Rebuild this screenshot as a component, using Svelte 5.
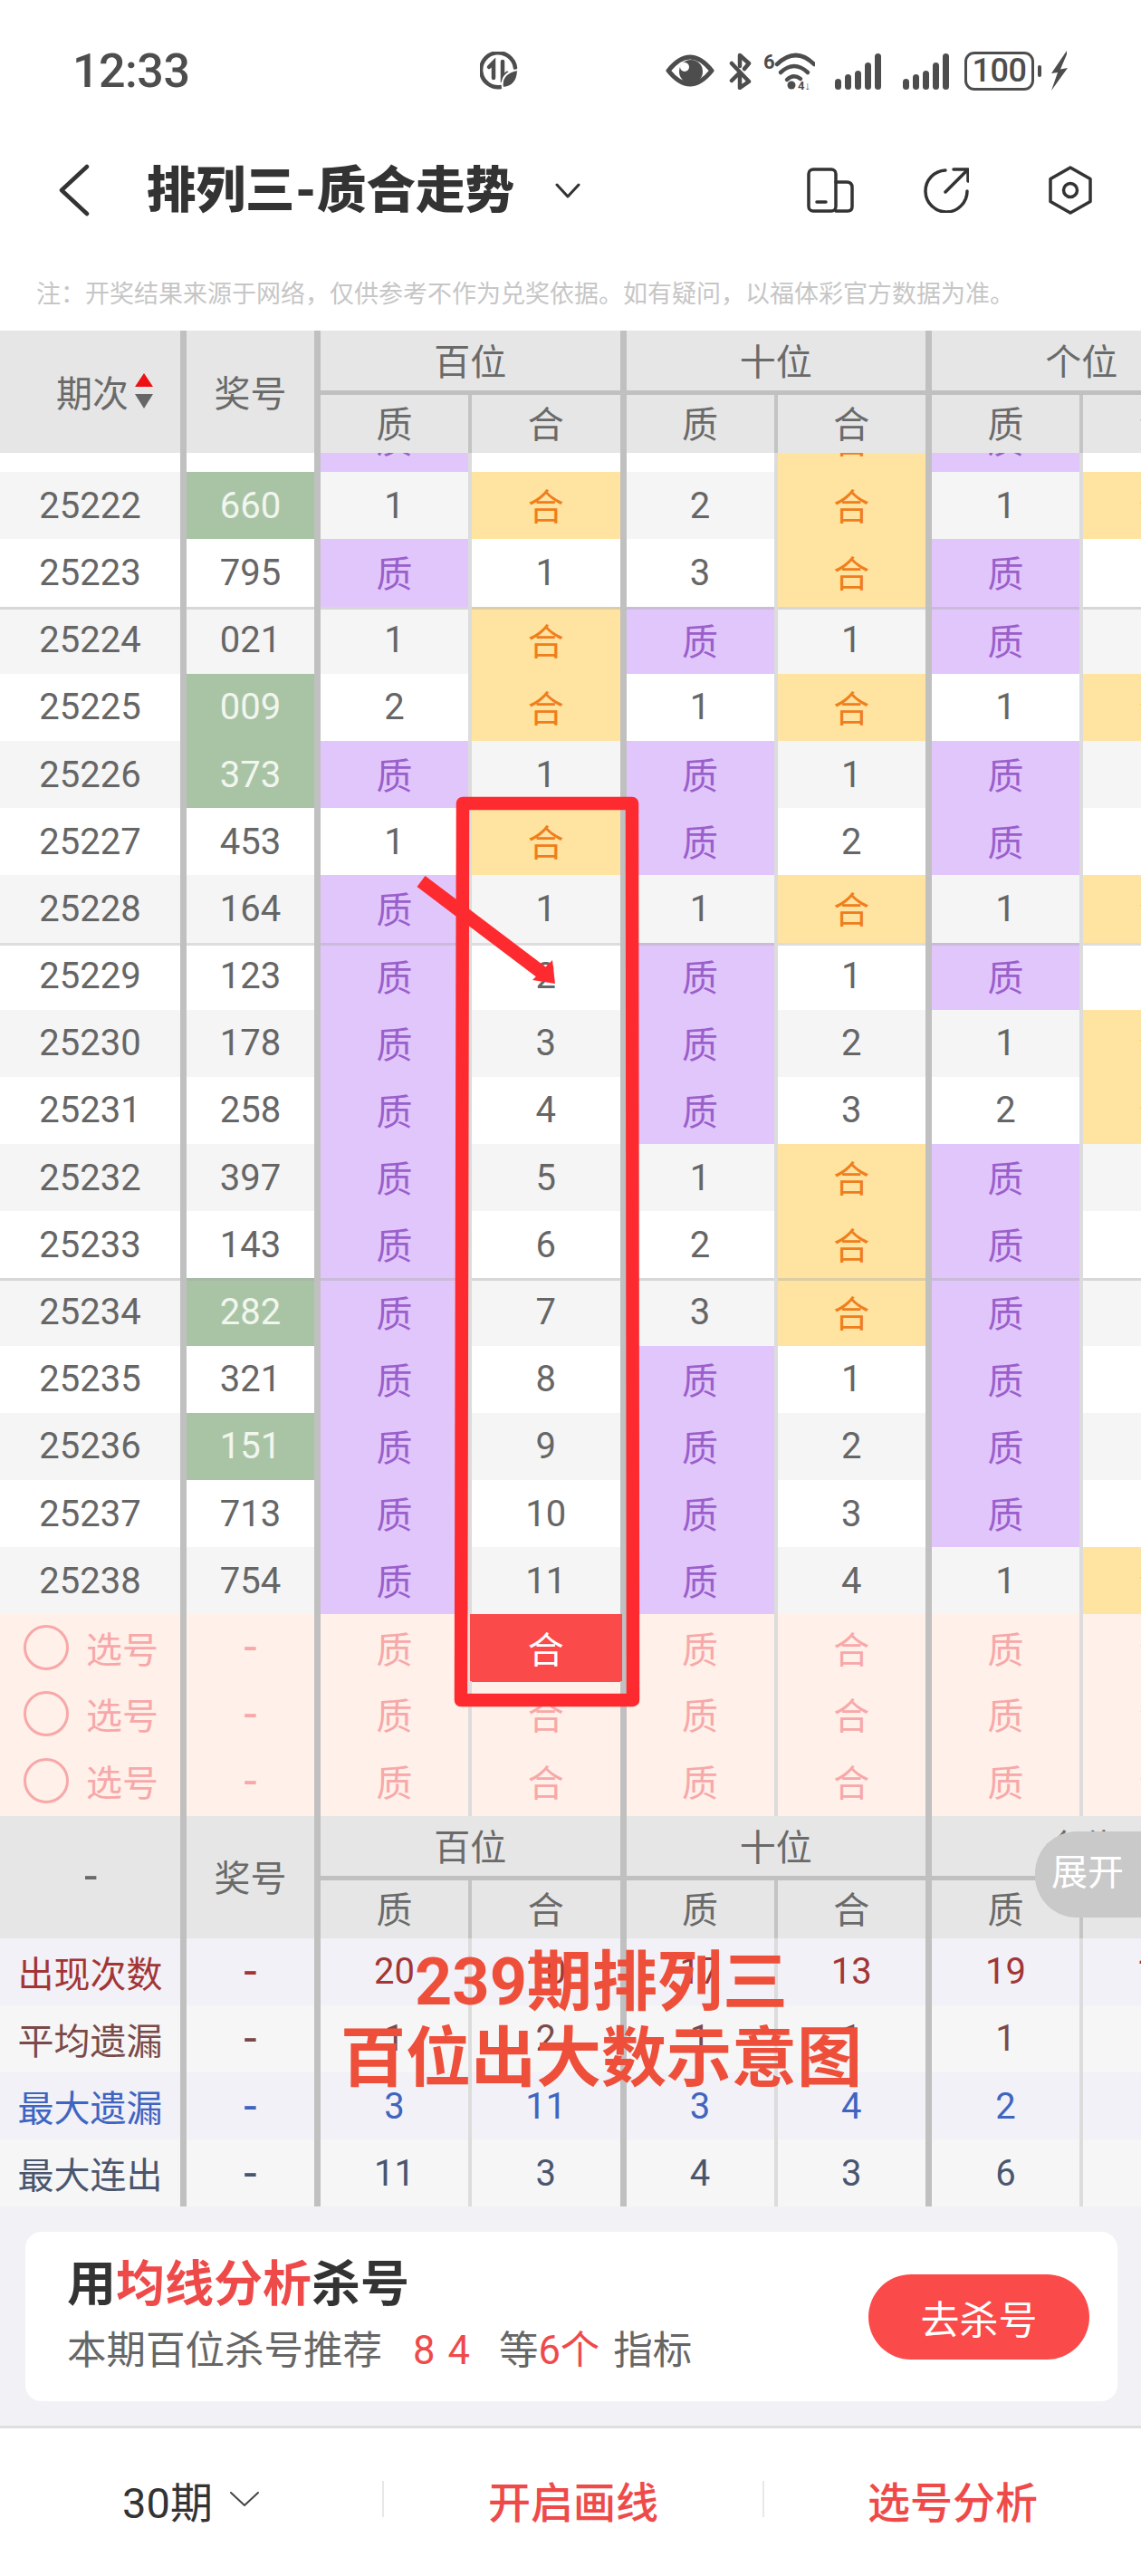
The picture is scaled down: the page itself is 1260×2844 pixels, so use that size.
<script lang="ts">
    type Row = { id: number; num: string; hit?: boolean; cells: (string | number)[] };

    const Z = "质";
    const H = "合";

    const rows: Row[] = [
        { id: 25221, num: "536", cells: [Z, 1, 1, H, Z, 1] },
        { id: 25222, num: "660", hit: true, cells: [1, H, 2, H, 1, H] },
        { id: 25223, num: "795", cells: [Z, 1, 3, H, Z, 1] },
        { id: 25224, num: "021", cells: [1, H, Z, 1, Z, 2] },
        { id: 25225, num: "009", hit: true, cells: [2, H, 1, H, 1, H] },
        { id: 25226, num: "373", hit: true, cells: [Z, 1, Z, 1, Z, 1] },
        { id: 25227, num: "453", cells: [1, H, Z, 2, Z, 2] },
        { id: 25228, num: "164", cells: [Z, 1, 1, H, 1, H] },
        { id: 25229, num: "123", cells: [Z, 2, Z, 1, Z, 1] },
        { id: 25230, num: "178", cells: [Z, 3, Z, 2, 1, H] },
        { id: 25231, num: "258", cells: [Z, 4, Z, 3, 2, H] },
        { id: 25232, num: "397", cells: [Z, 5, 1, H, Z, 1] },
        { id: 25233, num: "143", cells: [Z, 6, 2, H, Z, 2] },
        { id: 25234, num: "282", hit: true, cells: [Z, 7, 3, H, Z, 3] },
        { id: 25235, num: "321", cells: [Z, 8, Z, 1, Z, 4] },
        { id: 25236, num: "151", hit: true, cells: [Z, 9, Z, 2, Z, 5] },
        { id: 25237, num: "713", cells: [Z, 10, Z, 3, Z, 6] },
        { id: 25238, num: "754", cells: [Z, 11, Z, 4, 1, H] },
    ];

    const stats = [
        { label: "出现次数", tone: "red", values: [20, 10, 17, 13, 19, 11] },
        { label: "平均遗漏", tone: "brown", values: [1, 2, 1, 1, 1, 2] },
        { label: "最大遗漏", tone: "blue", values: [3, 11, 3, 4, 2, 6] },
        { label: "最大连出", tone: "slate", values: [11, 3, 4, 3, 6, 2] },
    ];

    const sub = [Z, H, Z, H, Z, H];

    const sepIds = [25224, 25229, 25234];

    function tint(v: string | number) {
        if (v === Z) return "zhi";
        if (v === H) return "he";
        return "";
    }
</script>

{#snippet tableHead(first)}
    <div class="head">
        <div class="hcell span2 first">{@render first()}</div>
        <div class="hcell span2 second">奖号</div>
        <div class="hcell group">百位</div>
        <div class="hcell group">十位</div>
        <div class="hcell group">个位</div>
        {#each sub as s, i}
            <div class="hcell subcell" class:thick={i % 2 === 1}>{s}</div>
        {/each}
    </div>
{/snippet}

{#snippet sortHead()}
    <div class="sort-label">
        <span>期次</span>
        <svg width="20" height="40" viewBox="0 0 20 40">
            <polygon points="10,0 20,15 0,15" fill="#ee0f12" />
            <polygon points="0,23 20,23 10,39" fill="#666" />
        </svg>
    </div>
{/snippet}

{#snippet dashHead()}
    <span class="head-dash">-</span>
{/snippet}

<div class="page">
    <div class="status">
        <span class="time">12:33</span>
        <svg class="saver" width="42" height="42" viewBox="0 0 42 42" fill="none" stroke="#4d4d4d" stroke-width="4.5" stroke-linecap="round">
            <path d="M23 39 A19 19 0 1 1 39 18" />
            <path d="M15 29 V12 L10 17" />
            <path d="M25 11 V29 L30 24" />
            <path d="M25 40 C23 28 30 22 42 20 C42 32 36 40 25 40Z" fill="#4d4d4d" stroke="#fff" stroke-width="2" />
        </svg>
        <div class="sys">
            <svg width="54" height="36" viewBox="0 0 54 36">
                <path d="M3 18 Q15 3 27 3 Q39 3 51 18 Q39 33 27 33 Q15 33 3 18Z" fill="none" stroke="#4d4d4d" stroke-width="5" stroke-linejoin="round" />
                <circle cx="28" cy="19" r="13" fill="#4d4d4d" />
                <circle cx="21" cy="14" r="5" fill="#fff" />
            </svg>
            <svg width="25" height="41" viewBox="0 0 25 41" fill="none" stroke="#4d4d4d" stroke-width="4.5" stroke-linecap="round" stroke-linejoin="round">
                <path d="M3 12 L22 32 L12 39 V25" />
                <path d="M3 31 L10 24" />
                <path d="M12 15 V3 L22 12 L17 18" />
            </svg>
            <svg width="57" height="41" viewBox="0 0 57 41" fill="none" stroke="#4d4d4d" stroke-width="4.5" stroke-linecap="round">
                <text x="0" y="18" class="tiny" font-size="22" fill="#4d4d4d" stroke="none">6</text>
                <path d="M15 13 Q36 -7 56 13" />
                <path d="M19 22 Q34 8 49 22" />
                <path d="M26 30 Q33 23 41 29" />
                <circle cx="31" cy="36" r="4.5" fill="#4d4d4d" stroke="none" />
                <text x="38" y="41" class="tiny" font-size="13" fill="#4d4d4d" stroke="none">4↓</text>
            </svg>
            <svg class="bars" width="51" height="41" viewBox="0 0 51 41" fill="#4d4d4d">
                <rect x="0" y="29" width="7" height="12" rx="3.5" />
                <rect x="11" y="24" width="7" height="17" rx="3.5" />
                <rect x="22" y="20" width="7" height="21" rx="3.5" />
                <rect x="33" y="11" width="7" height="30" rx="3.5" />
                <rect x="44" y="1" width="7" height="40" rx="3.5" />
            </svg>
            <svg class="bars second-bars" width="51" height="41" viewBox="0 0 51 41" fill="#4d4d4d">
                <rect x="0" y="29" width="7" height="12" rx="3.5" />
                <rect x="11" y="24" width="7" height="17" rx="3.5" />
                <rect x="22" y="20" width="7" height="21" rx="3.5" />
                <rect x="33" y="11" width="7" height="30" rx="3.5" />
                <rect x="44" y="1" width="7" height="40" rx="3.5" />
            </svg>
            <div class="battery">
                <span class="level">100</span>
                <span class="tip"></span>
            </div>
            <svg width="20" height="44" viewBox="0 0 20 44" fill="#4d4d4d">
                <polygon points="18,0 1,25 8,24 1,44 19,19 11,20.5 18,4" />
            </svg>
        </div>
    </div>

    <div class="nav">
        <svg class="back" width="34" height="58" viewBox="0 0 34 58" fill="none" stroke="#333" stroke-width="4.5" stroke-linecap="round" stroke-linejoin="round">
            <polyline points="31,3 3,29 31,55" />
        </svg>
        <h1>排列三-质合走势</h1>
        <svg class="caret" width="28" height="17" viewBox="0 0 28 17" fill="none" stroke="#333" stroke-width="3" stroke-linecap="round" stroke-linejoin="round">
            <polyline points="2,2 14,15 26,2" />
        </svg>
        <div class="nav-icons">
            <svg width="52" height="50" viewBox="0 0 52 50" fill="none" stroke="#333" stroke-width="3.5" stroke-linecap="round" stroke-linejoin="round">
                <rect x="2" y="2" width="30" height="46" rx="5" />
                <path d="M32 16 H44 Q50 16 50 22 V43 Q50 48 45 48 H32" />
                <path d="M11 38 H21" />
            </svg>
            <svg width="50" height="50" viewBox="0 0 50 50" fill="none" stroke="#333" stroke-width="3.5" stroke-linecap="round" stroke-linejoin="round">
                <path d="M24 3 A23 23 0 1 0 48 26" />
                <path d="M24 27 L48 3" />
                <path d="M33 2 H49 V15" />
            </svg>
            <svg class="hex" width="50" height="54" viewBox="0 0 50 54" fill="none" stroke="#333" stroke-width="3.5" stroke-linejoin="round">
                <polygon points="25,2 47,14.5 47,39.5 25,52 3,39.5 3,14.5" />
                <circle cx="25" cy="27" r="7.5" />
            </svg>
        </div>
    </div>

    <div class="note">注&#xFF1A;开奖结果来源于网络&#xFF0C;仅供参考不作为兑奖依据。如有疑问&#xFF0C;以福体彩官方数据为准。</div>

    <div class="table">
        {@render tableHead(sortHead)}

        <div class="body">
            <div class="rows">
                {#each rows as r, i}
                    <div class="row" class:stripe={i % 2 === 1} class:sep={sepIds.includes(r.id)}>
                        <div class="cell first">{r.id}</div>
                        <div class="cell second" class:hit={r.hit}>{r.num}</div>
                        {#each r.cells as v, c}
                            <div class="cell {tint(v)}" class:thick={c % 2 === 1}>{v}</div>
                        {/each}
                    </div>
                {/each}
            </div>
        </div>

        {#each [0, 1, 2] as p}
            <div class="row pick">
                <div class="cell first">
                    <span class="ring"></span>
                    <span>选号</span>
                </div>
                <div class="cell second dash">-</div>
                {#each sub as s, c}
                    <div class="cell" class:thick={c % 2 === 1} class:chosen={p === 0 && c === 1}>{s}</div>
                {/each}
            </div>
        {/each}

        {@render tableHead(dashHead)}

        {#each stats as s, i}
            <div class="row stat {s.tone}" class:alt={i % 2 === 1}>
                <div class="cell first">{s.label}</div>
                <div class="cell second dash">-</div>
                {#each s.values as v, c}
                    <div class="cell" class:thick={c % 2 === 1}>{v}</div>
                {/each}
            </div>
        {/each}

        <button type="button" class="expand">展开</button>
    </div>

    <div class="promo">
        <div class="card">
            <div class="card-text">
                <div class="card-title">用<em>均线分析</em>杀号</div>
                <div class="card-sub">
                    本期百位杀号推荐<em class="nums">8</em><em class="four">4</em><span class="deng">等</span><em>6个</em><span class="zb">指标</span>
                </div>
            </div>
            <button type="button" class="go">去杀号</button>
        </div>
    </div>

    <div class="footer">
        <div class="foot-item period">
            <span>30期</span>
            <svg width="34" height="18" viewBox="0 0 34 18" fill="none" stroke="#444" stroke-width="2" stroke-linecap="round" stroke-linejoin="round">
                <polyline points="2,2 17,16 32,2" />
            </svg>
        </div>
        <div class="foot-item action">开启画线</div>
        <div class="foot-item action">选号分析</div>
    </div>

    <svg class="marks" width="1260" height="2844" viewBox="0 0 1260 2844">
        <path d="M511 887 H698 L699 1877 H509 Z" fill="none" stroke="#fd2b30" stroke-width="14.5" stroke-linejoin="round" />
        <path d="M465 973 L604 1078" fill="none" stroke="#fd2b30" stroke-width="15" />
        <polygon points="613,1086 588,1082 610,1060" fill="#fd2b30" />
    </svg>

    <div class="caption">239期排列三<br />百位出大数示意图</div>
</div>

<style>
    :global(body) {
        margin: 0;
        background: #fff;
    }

    .page {
        position: relative;
        width: 1260px;
        height: 2844px;
        overflow: hidden;
        background: #fff;
        font-family: Roboto, "Noto Sans CJK SC", sans-serif;
        color: #666;
    }

    .status {
        display: flex;
        align-items: center;
        height: 156px;
        padding-left: 80px;
        box-sizing: border-box;
    }

    .time {
        width: 450px;
        font-size: 52px;
        font-weight: 500;
        letter-spacing: -0.5px;
        color: #4d4d4d;
    }

    .saver {
        flex: none;
    }

    .sys {
        display: flex;
        align-items: center;
        gap: 16px;
        margin-left: 163px;
    }

    .sys svg:nth-child(3) {
        margin-left: -3px;
    }

    .sys svg:nth-child(4) {
        margin-left: 6px;
    }

    .second-bars {
        margin-left: 8px;
    }

    .tiny {
        font-family: Roboto, sans-serif;
        font-weight: 700;
    }

    .battery {
        display: flex;
        align-items: center;
        gap: 4px;
        margin-left: 1px;
        margin-right: -6px;
    }

    .level {
        display: flex;
        align-items: center;
        justify-content: center;
        width: 77px;
        height: 43px;
        box-sizing: border-box;
        border: 3px solid #4d4d4d;
        border-radius: 11px;
        font-size: 36px;
        font-weight: 500;
        letter-spacing: -0.5px;
        color: #4d4d4d;
    }

    .tip {
        width: 4px;
        height: 13px;
        border-radius: 2px;
        background: #4d4d4d;
    }

    .nav {
        display: flex;
        align-items: center;
        height: 108px;
        padding-left: 65px;
    }

    h1 {
        margin: 0 0 0 63px;
        font-size: 54.5px;
        font-weight: 900;
        line-height: 1;
        color: #333;
        white-space: nowrap;
    }

    .caret {
        margin-left: 45px;
    }

    .nav-icons {
        display: flex;
        align-items: center;
        gap: 77px;
        margin-left: auto;
        margin-right: 53px;
    }

    .hex {
        margin-left: 10px;
    }

    .note {
        height: 101px;
        box-sizing: border-box;
        padding: 44px 0 0 40px;
        font-size: 27px;
        line-height: 34px;
        color: #c6c6c6;
        white-space: nowrap;
    }

    .table {
        position: relative;
        width: 1260px;
        overflow: hidden;
    }

    .head,
    .row {
        display: grid;
        grid-template-columns: 206px 148px 167px 170.5px 167px 170.5px 167px 170.5px;
        width: 1366px;
    }

    .head {
        grid-template-rows: 71px 64px;
        height: 135px;
        background: #e6e6e6;
    }

    .hcell {
        display: flex;
        align-items: center;
        justify-content: center;
        box-sizing: border-box;
        padding-bottom: 2px;
        font-size: 40px;
        color: #6a6a6a;
        border-right: 4px solid #c4c4c4;
    }

    .span2 {
        grid-row: 1 / 3;
        border-right: 7px solid #c0c0c0;
    }

    .hcell.first {
        justify-content: flex-start;
        padding-left: 62px;
    }

    .head-dash {
        margin-left: 31px;
        font-size: 52px;
    }

    .group {
        grid-column: span 2;
        border-right: 7px solid #c0c0c0;
        border-bottom: 5px solid #c0c0c0;
    }

    .hcell.subcell {
        padding-bottom: 4px;
    }

    .hcell.thick {
        border-right: 7px solid #c0c0c0;
    }

    .sort-label {
        display: flex;
        align-items: center;
        gap: 7px;
    }

    .body {
        height: 1282px;
        overflow: hidden;
    }

    .rows {
        margin-top: -53px;
    }

    .row {
        height: 74.2px;
        background: #fff;
    }

    .row.stripe {
        background: #f5f5f5;
    }

    .cell {
        display: flex;
        align-items: center;
        justify-content: center;
        box-sizing: border-box;
        font-size: 40px;
        color: #666;
        border-right: 4px solid #dcdcdc;
    }

    .cell.first,
    .cell.second,
    .cell.thick {
        border-right: 7px solid #c0c0c0;
    }

    .cell.dash {
        font-size: 52px;
    }

    .row.sep .cell {
        box-shadow: inset 0 3px 0 rgba(170, 170, 170, 0.4);
    }

    .cell.hit {
        background: #a9c4a5;
        color: #f1f6ef;
    }

    .cell.zhi {
        padding-bottom: 2px;
        background: #e1c6fc;
        color: #9a5fcb;
    }

    .cell.he {
        padding-bottom: 2px;
        background: #ffe3a0;
        color: #ef7e1c;
    }

    .pick {
        background: #fff0ea;
    }

    .pick .cell {
        padding-bottom: 2px;
        color: #f7a8a8;
    }

    .pick .first {
        justify-content: flex-start;
        gap: 19px;
        padding-left: 26px;
    }

    .ring {
        width: 50px;
        height: 50px;
        box-sizing: border-box;
        border: 3px solid #f8a8a8;
        border-radius: 50%;
    }

    .pick .cell.chosen {
        height: 75px;
        margin: 0 -2px 0 -2px;
        background: #fb4a4a;
        color: #fff;
    }

    .stat {
        background: #f1f1f7;
    }

    .stat.alt {
        background: #f6f6f7;
    }

    .stat.red .cell {
        color: #a33535;
    }

    .stat.brown .cell {
        color: #7a4a4a;
    }

    .stat.blue .cell {
        color: #3f65c0;
    }

    .stat.slate .cell {
        color: #4a566e;
    }

    .expand {
        position: absolute;
        top: 1657px;
        right: 0;
        width: 117px;
        height: 95px;
        padding: 0 0 12px 18px;
        border: 0;
        border-radius: 46px 0 0 46px;
        background: #c9c9c9;
        font: 40px Roboto, "Noto Sans CJK SC", sans-serif;
        color: #fff;
        text-align: left;
    }

    .promo {
        height: 242px;
        box-sizing: border-box;
        padding: 28px 26px 0 28px;
        background: #f2f2f6;
    }

    .card {
        display: flex;
        align-items: center;
        justify-content: space-between;
        height: 187px;
        box-sizing: border-box;
        padding: 0 31px 0 46px;
        border-radius: 18px;
        background: #fff;
    }

    .card em {
        font-style: normal;
        color: #ef4a4a;
    }

    .card-title {
        font-size: 54px;
        font-weight: 700;
        line-height: 60px;
        color: #333;
    }

    .card-sub {
        margin-top: 16px;
        font-size: 43.5px;
        line-height: 54px;
        color: #666;
        white-space: nowrap;
    }

    .nums {
        margin-left: 34px;
    }

    .four {
        margin-left: 14px;
    }

    .deng {
        margin-left: 32px;
    }

    .zb {
        margin-left: 15px;
    }

    .go {
        width: 244px;
        height: 94px;
        padding: 0;
        border: 0;
        border-radius: 47px;
        background: #fb4a4a;
        font: 43px Roboto, "Noto Sans CJK SC", sans-serif;
        color: #fff;
    }

    .footer {
        display: grid;
        grid-template-columns: 422px 420px 418px;
        align-items: center;
        height: 165px;
        padding-bottom: 6px;
        box-sizing: border-box;
        border-top: 3px solid #dedede;
    }

    .foot-item {
        display: flex;
        align-items: center;
        justify-content: center;
        height: 40px;
        box-sizing: border-box;
        font-size: 47px;
    }

    .foot-item + .foot-item {
        border-left: 2px solid #e8e8e8;
    }

    .period {
        gap: 18px;
        color: #333;
    }

    .action {
        font-weight: 500;
        color: #ef4a4a;
    }

    .marks {
        position: absolute;
        top: 0;
        left: 0;
        pointer-events: none;
    }

    .caption {
        position: absolute;
        top: 2147px;
        left: 364px;
        width: 600px;
        font-size: 72px;
        font-weight: 700;
        line-height: 84px;
        color: #ee4f3a;
        text-align: center;
        white-space: nowrap;
    }
</style>
